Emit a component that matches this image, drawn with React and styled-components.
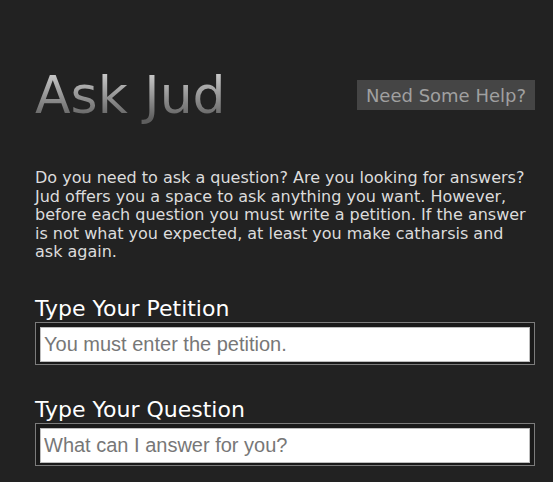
import styled, { createGlobalStyle } from "styled-components";

const GlobalStyle = createGlobalStyle`
  body {
    margin: 0;
    background: #222222;
    font-family: "DejaVu Sans", Verdana, sans-serif;
  }
`;

const Page = styled.div`
  padding: 60px 18px 0 35px;
`;

const Header = styled.header`
  display: flex;
  justify-content: space-between;
  align-items: center;
`;

const Title = styled.h1`
  margin: 0;
  font-size: 52px;
  font-weight: normal;
  line-height: 70px;
  background: linear-gradient(to bottom, #c8c8c8 20%, #5e5e5e 85%);
  -webkit-background-clip: text;
  background-clip: text;
  color: transparent;
`;

const HelpButton = styled.button`
  border: 0;
  background: #454545;
  color: #a0a0a0;
  font-family: "DejaVu Sans", Verdana, sans-serif;
  font-size: 18px;
  padding: 4px 9px;
  height: 30px;
`;

const Intro = styled.p`
  margin: 39px 0 0;
  color: #dcdcdc;
  font-size: 16px;
  line-height: 18.6px;
`;

const Field = styled.div`
  margin-top: ${(p) => p.$gap}px;
`;

const Label = styled.label`
  display: block;
  color: #ffffff;
  font-size: 22px;
  line-height: 26px;
`;

const InputFrame = styled.div`
  border: 1px solid #7c7c7c;
  background: #1a1a1a;
  padding: 4px 4px 2px;
`;

const Input = styled.input`
  display: block;
  width: 100%;
  box-sizing: border-box;
  height: 35px;
  border: 1px solid #bdbdbd;
  background: #ffffff;
  font-family: "Liberation Sans", Arial, sans-serif;
  font-size: 20px;
  padding: 0 3px;
  &::placeholder {
    color: #777777;
  }
`;

export default function App() {
  return (
    <Page>
      <GlobalStyle />
      <Header>
        <Title>Ask Jud</Title>
        <HelpButton>Need Some Help?</HelpButton>
      </Header>
      <Intro>
        Do you need to ask a question? Are you looking for answers? Jud offers
        you a space to ask anything you want. However, before each question you
        must write a petition. If the answer is not what you expected, at least
        you make catharsis and ask again.
      </Intro>
      <Field $gap={34}>
        <Label>Type Your Petition</Label>
        <InputFrame>
          <Input placeholder="You must enter the petition." />
        </InputFrame>
      </Field>
      <Field $gap={32}>
        <Label>Type Your Question</Label>
        <InputFrame>
          <Input placeholder="What can I answer for you?" />
        </InputFrame>
      </Field>
    </Page>
  );
}
